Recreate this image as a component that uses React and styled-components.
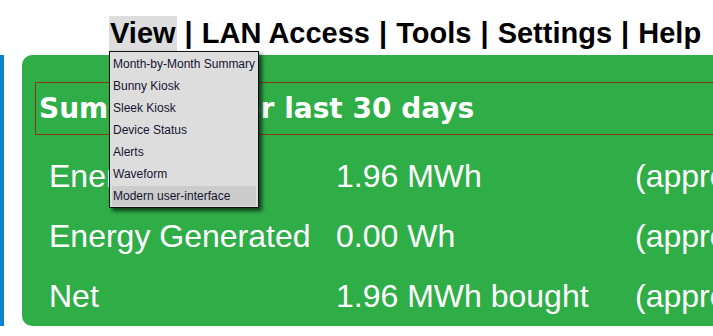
import React from 'react';
import styled, { createGlobalStyle } from 'styled-components';

const GlobalStyle = createGlobalStyle`
  html, body {
    margin: 0;
    padding: 0;
    background: #fff;
    overflow: hidden;
  }
  body {
    font-family: "Liberation Sans", Arial, sans-serif;
  }
`

const Page = styled.div`
  width: 713px;
  height: 336px;
  overflow: hidden;
`

const Header = styled.div`
  height: 55px;
  box-sizing: border-box;
  padding: 16px 0 0 109px;
  display: flex;
  align-items: flex-start;
  white-space: nowrap;
`

const NavItem = styled.div`
  position: relative;
  font-size: 29px;
  font-weight: bold;
  line-height: 35px;
  color: #000;
  padding: 0 1px;
  background-color: ${props => (props.open ? '#dddddd' : 'transparent')};
`

const Separator = styled.span`
  font-size: 29px;
  font-weight: bold;
  line-height: 35px;
  color: #000;
  white-space: pre;
`

const Dropdown = styled.ul`
  position: absolute;
  top: 35px;
  left: 0;
  z-index: 10;
  width: 150px;
  box-sizing: border-box;
  margin: 0;
  padding: 2px 2px 1px;
  list-style: none;
  background-color: #dddddd;
  border: 1px solid #111;
  box-shadow: 3px 3px 4px rgba(0, 0, 0, 0.65);
`

const DropItem = styled.li`
  height: 20px;
  line-height: 20px;
  margin-bottom: 2px;
  padding-left: 1px;
  font-size: 12px;
  font-weight: normal;
  color: #151530;
  background-color: ${props => (props.active ? '#cccccc' : 'transparent')};
  &:last-child {
    margin-bottom: 0;
  }
`

const Main = styled.div`
  display: flex;
  align-items: flex-start;
  gap: 18px;
`

const SideStrip = styled.div`
  width: 4px;
  height: 271px;
  background-color: #0a84d2;
  flex-shrink: 0;
`

const Panel = styled.div`
  width: 900px;
  flex-shrink: 0;
  height: 271px;
  box-sizing: border-box;
  padding: 27px 0 0 13px;
  background-color: #2fae48;
  border-radius: 10px;
  color: #fff;
`

const TitleBox = styled.div`
  height: 53px;
  box-sizing: border-box;
  border: 1px solid #8a3a12;
  border-right: none;
  padding-left: 3px;
  display: flex;
  align-items: center;
`

const Title = styled.h2`
  margin: 0;
  font-family: "DejaVu Sans", Verdana, sans-serif;
  font-size: 28px;
  font-weight: bold;
  line-height: 1;
  color: #fff;
`

const TitleLead = styled.span`
  word-spacing: 31px;
`

const Table = styled.div`
  margin-top: 11px;
  padding-left: 14px;
  display: grid;
  grid-template-columns: 287px 299px auto;
`

const Cell = styled.div`
  font-size: 32px;
  line-height: 60px;
  white-space: nowrap;
  color: #fff;
`

const menuItems = [
  'Month-by-Month Summary',
  'Bunny Kiosk',
  'Sleek Kiosk',
  'Device Status',
  'Alerts',
  'Waveform',
  'Modern user-interface',
]

const rows = [
  ['Energy Used', '1.96 MWh', '(approximately)'],
  ['Energy Generated', '0.00 Wh', '(approximately)'],
  ['Net', '1.96 MWh bought', '(approximately)'],
]

export default function App() {
  return (
    <Page>
      <GlobalStyle />
      <Header>
        <NavItem open>
          View
          <Dropdown>
            {menuItems.map((item, i) => (
              <DropItem key={item} active={i === menuItems.length - 1}>{item}</DropItem>
            ))}
          </Dropdown>
        </NavItem>
        <Separator> | </Separator>
        <NavItem>LAN Access</NavItem>
        <Separator> | </Separator>
        <NavItem>Tools</NavItem>
        <Separator> | </Separator>
        <NavItem>Settings</NavItem>
        <Separator> | </Separator>
        <NavItem>Help</NavItem>
      </Header>
      <Main>
        <SideStrip />
        <Panel>
          <TitleBox>
            <Title><TitleLead>Summary for</TitleLead> last 30 days</Title>
          </TitleBox>
          <Table>
            {rows.map(row => row.map((cell, j) => <Cell key={row[0] + j}>{cell}</Cell>))}
          </Table>
        </Panel>
      </Main>
    </Page>
  );
}
